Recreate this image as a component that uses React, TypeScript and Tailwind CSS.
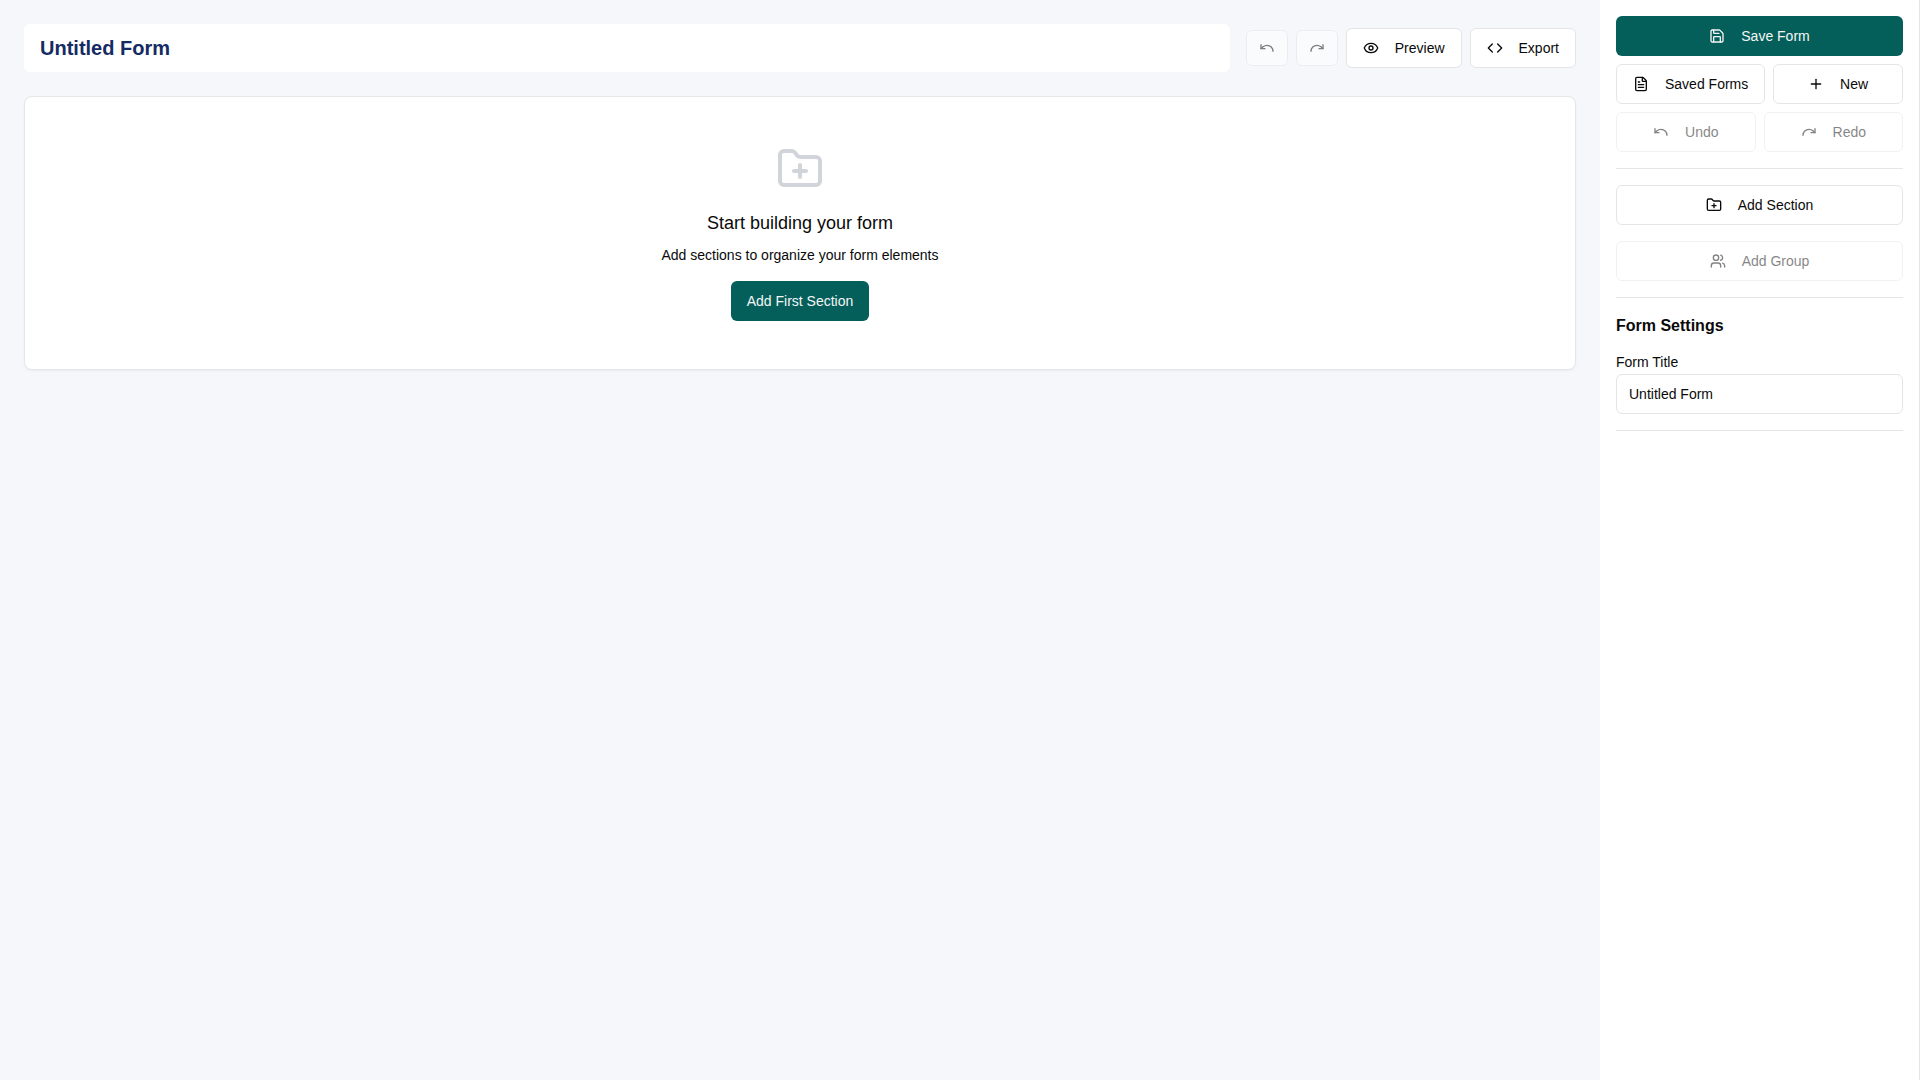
import { useState } from "react";
import {
  Code,
  Eye,
  FileText,
  FolderPlus,
  Plus,
  Redo,
  Save,
  Undo,
  Users,
} from "lucide-react";
import type { ButtonHTMLAttributes } from "react";
import { twMerge } from "tailwind-merge";

interface IButton extends ButtonHTMLAttributes<HTMLButtonElement> {
  variant?: "primary" | "outline";
}

const Button = ({ className, variant = "outline", ...props }: IButton) => {
  return (
    <button
      type="button"
      className={twMerge(
        "inline-flex h-10 items-center justify-center gap-4 rounded-md px-4 text-sm whitespace-nowrap disabled:opacity-50",
        variant === "primary"
          ? "bg-[#045f5b] text-[#f5f5f5]"
          : "border border-[#e5e5e5] bg-white text-[#0a0a0a]",
        className
      )}
      {...props}
    />
  );
};

const Separator = () => <hr className="border-[#e5e5e5]" />;

interface IHeader {
  title: string;
  onTitleChange: (title: string) => void;
}

const Header = ({ title, onTitleChange }: IHeader) => {
  return (
    <header className="flex items-center gap-4">
      <input
        aria-label="Form name"
        value={title}
        onChange={(e) => onTitleChange(e.target.value)}
        className="h-12 min-w-0 flex-1 rounded-md bg-white px-4 text-xl font-bold text-[#142b63] outline-none"
      />
      <div className="flex items-center gap-2">
        <Button className="h-9 px-3" aria-label="Undo" disabled>
          <Undo className="size-4" />
        </Button>
        <Button className="h-9 px-3" aria-label="Redo" disabled>
          <Redo className="size-4" />
        </Button>
        <Button>
          <Eye className="size-4" />
          Preview
        </Button>
        <Button>
          <Code className="size-4" />
          Export
        </Button>
      </div>
    </header>
  );
};

const EmptyState = () => {
  return (
    <section className="flex flex-col items-center rounded-lg border border-[#e5e7eb] bg-white p-12 shadow-xs">
      <FolderPlus className="mb-4 size-12 text-[#d1d5db]" />
      <h2 className="mb-2 text-lg">Start building your form</h2>
      <p className="mb-4 text-sm">Add sections to organize your form elements</p>
      <Button variant="primary">Add First Section</Button>
    </section>
  );
};

const Sidebar = ({ title, onTitleChange }: IHeader) => {
  return (
    <aside className="flex w-80 shrink-0 flex-col gap-4 border-r border-[#e5e5e5] bg-white p-4">
      <div className="flex flex-col gap-2">
        <Button variant="primary">
          <Save className="size-4" />
          Save Form
        </Button>
        <div className="flex gap-2">
          <Button className="flex-1">
            <FileText className="size-4" />
            Saved Forms
          </Button>
          <Button className="flex-1">
            <Plus className="size-4" />
            New
          </Button>
        </div>
        <div className="flex gap-2">
          <Button className="flex-1" disabled>
            <Undo className="size-4" />
            Undo
          </Button>
          <Button className="flex-1" disabled>
            <Redo className="size-4" />
            Redo
          </Button>
        </div>
      </div>
      <Separator />
      <Button>
        <FolderPlus className="size-4" />
        Add Section
      </Button>
      <Button disabled>
        <Users className="size-4" />
        Add Group
      </Button>
      <Separator />
      <div>
        <h3 className="mb-3 font-bold">Form Settings</h3>
        <div>
          <label htmlFor="form-title" className="text-sm">
            Form Title
          </label>
          <input
            id="form-title"
            value={title}
            onChange={(e) => onTitleChange(e.target.value)}
            className="block h-10 w-full rounded-md border border-[#e5e5e5] bg-white px-3 text-sm outline-none"
          />
        </div>
      </div>
      <Separator />
    </aside>
  );
};

export default function App() {
  const [title, setTitle] = useState("Untitled Form");

  return (
    <div className="flex min-h-screen bg-[#f6f7fb] font-[Arial,'Liberation_Sans',sans-serif] text-[#0a0a0a]">
      <main className="flex min-w-0 flex-1 flex-col gap-6 p-6">
        <Header title={title} onTitleChange={setTitle} />
        <EmptyState />
      </main>
      <Sidebar title={title} onTitleChange={setTitle} />
    </div>
  );
}
